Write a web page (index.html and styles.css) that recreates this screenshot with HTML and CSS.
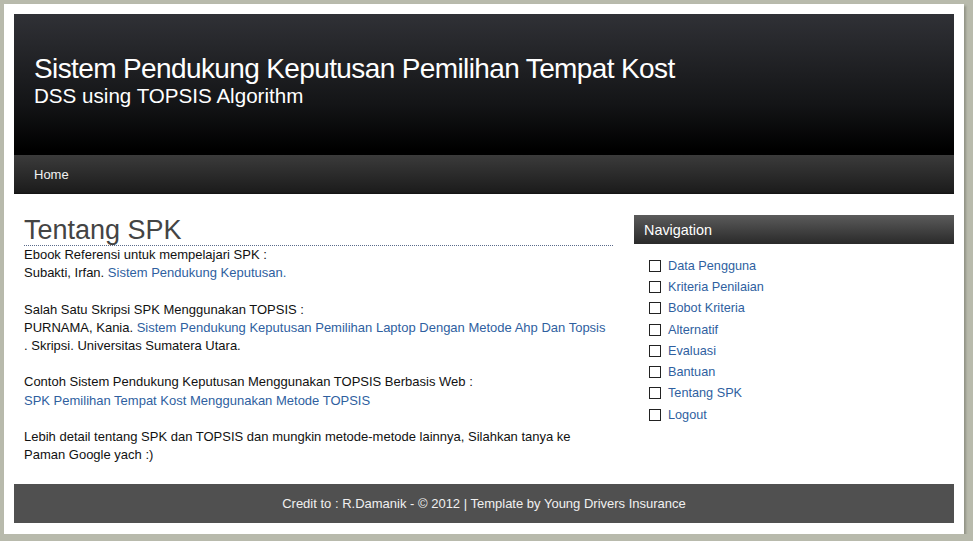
FILE: index.html
```html
<!DOCTYPE html>
<html>
<head>
<meta charset="utf-8">
<title>SPK</title>
<link rel="stylesheet" href="styles.css">
</head>
<body>
<div class="page">
  <header class="header">
    <h1 class="title">Sistem Pendukung Keputusan Pemilihan Tempat Kost</h1>
    <p class="subtitle">DSS using TOPSIS Algorithm</p>
  </header>
  <nav class="menu"><a class="menu-link" href="#">Home</a></nav>
  <div class="main">
    <section class="content">
      <h2 class="heading">Tentang SPK</h2>
      <p class="text">Ebook Referensi untuk mempelajari SPK :<br>
      Subakti, Irfan. <a class="link" href="#">Sistem Pendukung Keputusan.</a><br><br>
      Salah Satu Skripsi SPK Menggunakan TOPSIS :<br>
      PURNAMA, Kania. <a class="link" href="#">Sistem Pendukung Keputusan Pemilihan Laptop Dengan Metode Ahp Dan Topsis</a> .&nbsp;Skripsi. Universitas Sumatera Utara.<br><br>
      Contoh Sistem Pendukung Keputusan Menggunakan TOPSIS Berbasis Web :<br>
      <a class="link" href="#">SPK Pemilihan Tempat Kost Menggunakan Metode TOPSIS</a><br><br>
      Lebih detail tentang SPK dan TOPSIS dan mungkin metode-metode lainnya, Silahkan tanya ke Paman Google yach :)</p>
    </section>
    <aside class="sidebar">
      <h3 class="side-title">Navigation</h3>
      <ul class="side-list">
        <li class="side-item"><a class="link" href="#">Data Pengguna</a></li>
        <li class="side-item"><a class="link" href="#">Kriteria Penilaian</a></li>
        <li class="side-item"><a class="link" href="#">Bobot Kriteria</a></li>
        <li class="side-item"><a class="link" href="#">Alternatif</a></li>
        <li class="side-item"><a class="link" href="#">Evaluasi</a></li>
        <li class="side-item"><a class="link" href="#">Bantuan</a></li>
        <li class="side-item"><a class="link" href="#">Tentang SPK</a></li>
        <li class="side-item"><a class="link" href="#">Logout</a></li>
      </ul>
    </aside>
  </div>
  <footer class="footer">Credit to : R.Damanik - © 2012 | Template by Young Drivers Insurance</footer>
</div>
</body>
</html>
```
FILE: styles.css
```css
html, body {
  margin: 0;
  padding: 0;
}
body {
  background: #b8baac;
  font-family: "Liberation Sans", Arial, sans-serif;
  font-size: 13px;
  color: #111;
}
.page {
  width: 940px;
  margin: 4px 0 0 4px;
  padding: 10px 10px 11px 10px;
  background: #fff;
  box-shadow: 2px 2px 2px rgba(120,122,108,0.6);
}
.header {
  height: 141px;
  box-sizing: border-box;
  padding: 39px 0 0 20px;
  background: linear-gradient(to bottom, #303136 0%, #131416 65%, #000 96%, #000 100%);
  color: #fff;
}
.title {
  margin: 0;
  font-size: 28px;
  line-height: 32px;
  font-weight: normal;
  letter-spacing: -0.62px;
}
.subtitle {
  margin: 0;
  font-size: 20.6px;
  line-height: 22px;
}
.menu {
  height: 39px;
  box-sizing: border-box;
  padding: 0 0 0 20px;
  display: flex;
  align-items: center;
  background: linear-gradient(to bottom, #3b3b3b 0%, #1c1c1c 95%, #111 100%);
}
.menu-link {
  color: #f2f2f2;
  text-decoration: none;
  font-size: 13px;
}
.main {
  display: flex;
  gap: 21px;
  padding: 21px 0 20px 10px;
}
.content {
  width: 589px;
}
.heading {
  margin: 0;
  font-size: 27px;
  line-height: 30px;
  font-weight: normal;
  color: #444;
  border-bottom: 1px dotted #5a6a8a;
}
.text {
  margin: 0;
  line-height: 18.2px;
  color: #111;
}
.link {
  color: #2f5f9f;
  text-decoration: none;
}
.sidebar {
  width: 320px;
}
.side-title {
  margin: 0;
  height: 29px;
  box-sizing: border-box;
  padding-left: 10px;
  display: flex;
  align-items: center;
  font-size: 14.4px;
  font-weight: normal;
  color: #fff;
  background: linear-gradient(to bottom, #5b5b5b 0%, #2a2a2a 100%);
}
.side-list {
  list-style: none;
  margin: 11px 0 0 0;
  padding: 0 0 0 15px;
}
.side-item {
  display: flex;
  align-items: center;
  height: 21.3px;
  font-size: 12.7px;
}
.side-item::before {
  content: "";
  width: 10px;
  height: 10px;
  border: 1px solid #222;
  margin-right: 7px;
  flex: none;
}
.footer {
  height: 39px;
  display: flex;
  align-items: center;
  justify-content: center;
  background: #505050;
  color: #f0f0f0;
  font-size: 13px;
}
```
